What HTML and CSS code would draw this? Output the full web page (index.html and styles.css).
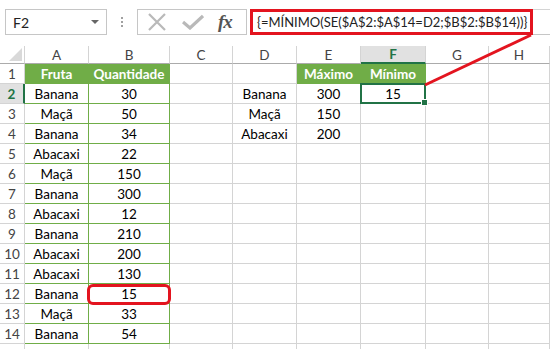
FILE: index.html
```html
<!DOCTYPE html>
<html lang="pt">
<head>
    <meta charset="UTF-8">
    <title>Mínimo com SE</title>
    <link rel="stylesheet" href="styles.css">
</head>
<body>
    <div class="toolbar">
        <div class="name-box">
            <span>F2</span>
            <span class="drop"></span>
        </div>
        <div class="dots"><i></i><i></i><i></i></div>
        <div class="fx-buttons">
            <svg width="20" height="18" viewBox="0 0 20 18"><path d="M2 1 L18 17 M18 1 L2 17" stroke="#b9b9b9" stroke-width="2.2" fill="none"/></svg>
            <svg width="22" height="16" viewBox="0 0 22 16"><path d="M1 8 L8 14 L21 2" stroke="#b9b9b9" stroke-width="3.2" fill="none"/></svg>
            <span class="fx">fx</span>
        </div>
        <div class="formula">
            <span class="formula-text">{=MÍNIMO(SE($A$2:$A$14=D2;$B$2:$B$14))}</span>
        </div>
    </div>

    <div class="sheet">
        <div class="row head">
            <div class="corner"></div>
            <div class="col">A</div><div class="col">B</div><div class="col">C</div><div class="col">D</div>
            <div class="col">E</div><div class="col active">F</div><div class="col">G</div><div class="col">H</div>
        </div>
        <div class="row">
            <div class="num">1</div>
            <div class="cell th">Fruta</div><div class="cell th">Quantidade</div><div class="cell"></div><div class="cell"></div>
            <div class="cell th">Máximo</div><div class="cell th">Mínimo</div><div class="cell"></div><div class="cell"></div>
        </div>
        <div class="row">
            <div class="num active">2</div>
            <div class="cell t">Banana</div><div class="cell t">30</div><div class="cell"></div><div class="cell">Banana</div>
            <div class="cell">300</div><div class="cell sel">15</div><div class="cell"></div><div class="cell"></div>
        </div>
        <div class="row">
            <div class="num">3</div>
            <div class="cell t">Maçã</div><div class="cell t">50</div><div class="cell"></div><div class="cell">Maçã</div>
            <div class="cell">150</div><div class="cell"></div><div class="cell"></div><div class="cell"></div>
        </div>
        <div class="row">
            <div class="num">4</div>
            <div class="cell t">Banana</div><div class="cell t">34</div><div class="cell"></div><div class="cell">Abacaxi</div>
            <div class="cell">200</div><div class="cell"></div><div class="cell"></div><div class="cell"></div>
        </div>
        <div class="row">
            <div class="num">5</div>
            <div class="cell t">Abacaxi</div><div class="cell t">22</div><div class="cell"></div><div class="cell"></div>
            <div class="cell"></div><div class="cell"></div><div class="cell"></div><div class="cell"></div>
        </div>
        <div class="row">
            <div class="num">6</div>
            <div class="cell t">Maçã</div><div class="cell t">150</div><div class="cell"></div><div class="cell"></div>
            <div class="cell"></div><div class="cell"></div><div class="cell"></div><div class="cell"></div>
        </div>
        <div class="row">
            <div class="num">7</div>
            <div class="cell t">Banana</div><div class="cell t">300</div><div class="cell"></div><div class="cell"></div>
            <div class="cell"></div><div class="cell"></div><div class="cell"></div><div class="cell"></div>
        </div>
        <div class="row">
            <div class="num">8</div>
            <div class="cell t">Abacaxi</div><div class="cell t">12</div><div class="cell"></div><div class="cell"></div>
            <div class="cell"></div><div class="cell"></div><div class="cell"></div><div class="cell"></div>
        </div>
        <div class="row">
            <div class="num">9</div>
            <div class="cell t">Banana</div><div class="cell t">210</div><div class="cell"></div><div class="cell"></div>
            <div class="cell"></div><div class="cell"></div><div class="cell"></div><div class="cell"></div>
        </div>
        <div class="row">
            <div class="num">10</div>
            <div class="cell t">Abacaxi</div><div class="cell t">200</div><div class="cell"></div><div class="cell"></div>
            <div class="cell"></div><div class="cell"></div><div class="cell"></div><div class="cell"></div>
        </div>
        <div class="row">
            <div class="num">11</div>
            <div class="cell t">Abacaxi</div><div class="cell t">130</div><div class="cell"></div><div class="cell"></div>
            <div class="cell"></div><div class="cell"></div><div class="cell"></div><div class="cell"></div>
        </div>
        <div class="row">
            <div class="num">12</div>
            <div class="cell t">Banana</div><div class="cell t mark">15</div><div class="cell"></div><div class="cell"></div>
            <div class="cell"></div><div class="cell"></div><div class="cell"></div><div class="cell"></div>
        </div>
        <div class="row">
            <div class="num">13</div>
            <div class="cell t">Maçã</div><div class="cell t">33</div><div class="cell"></div><div class="cell"></div>
            <div class="cell"></div><div class="cell"></div><div class="cell"></div><div class="cell"></div>
        </div>
        <div class="row">
            <div class="num">14</div>
            <div class="cell t">Banana</div><div class="cell t">54</div><div class="cell"></div><div class="cell"></div>
            <div class="cell"></div><div class="cell"></div><div class="cell"></div><div class="cell"></div>
        </div>
        <div class="row">
            <div class="num"></div>
            <div class="cell"></div><div class="cell"></div><div class="cell"></div><div class="cell"></div>
            <div class="cell"></div><div class="cell"></div><div class="cell"></div><div class="cell"></div>
        </div>
    </div>

    <!-- callout from the formula box to F2 -->
    <svg class="callout" width="550" height="349">
        <line x1="531" y1="35" x2="425" y2="85" stroke="#e3141f" stroke-width="3"/>
    </svg>
</body>
</html>
```

FILE: styles.css
```css
* {
    box-sizing: border-box;
}

body {
    margin: 0;
    width: 550px;
    height: 349px;
    overflow: hidden;
    background: #fff;
    font-family: 'Lato', 'Liberation Sans', sans-serif;
    color: #000;
    position: relative;
}

/* Name box + formula bar */
.toolbar {
    height: 46px;
    display: flex;
    align-items: flex-start;
    padding-top: 9px;
}

.name-box {
    margin-left: 5px;
    width: 102px;
    height: 26px;
    border: 1px solid #c6c6c6;
    display: flex;
    align-items: center;
    justify-content: space-between;
    padding: 0 7px 0 7px;
    font-size: 14px;
    color: #222;
}

.drop {
    width: 0;
    height: 0;
    border-left: 4px solid transparent;
    border-right: 4px solid transparent;
    border-top: 4px solid #666;
}

.dots {
    width: 30px;
    height: 26px;
    display: flex;
    flex-direction: column;
    align-items: center;
    justify-content: center;
    gap: 2px;
}

.dots i {
    width: 2px;
    height: 2px;
    background: #a0a0a0;
}

.fx-buttons {
    width: 110px;
    height: 26px;
    border: 1px solid #c6c6c6;
    display: flex;
    align-items: center;
    padding-left: 9px;
    gap: 15px;
}

.fx {
    font-family: 'Liberation Serif', serif;
    font-style: italic;
    font-weight: bold;
    font-size: 19px;
    color: #555;
    margin-left: -1px;
    letter-spacing: -1px;
}

.formula {
    flex: 1;
    margin-left: 3px;
    height: 26px;
    border-top: 1px solid #d4d4d4;
    border-bottom: 1px solid #c6c6c6;
    display: flex;
}

.formula-text {
    width: 283px;
    height: 26px;
    margin-top: -1px;
    border: 3px solid #e3141f;
    padding-left: 4px;
    font-size: 13px;
    line-height: 20px;
    color: #222;
    white-space: nowrap;
}

/* Grid */
.row {
    display: grid;
    grid-template-columns: 25px 64px 81px 63px 64px 64px 65px 63px 61px;
    height: 20px;
}

.row.head {
    height: 18px;
}

.corner {
    border-right: 1px solid #d4d4d4;
    border-bottom: 1px solid #ababab;
    position: relative;
}

.corner::after {
    content: "";
    position: absolute;
    right: 2px;
    bottom: 2px;
    border-left: 13px solid transparent;
    border-bottom: 13px solid #d9d9d9;
}

.col {
    border-right: 1px solid #d4d4d4;
    border-bottom: 1px solid #ababab;
    display: flex;
    align-items: center;
    justify-content: center;
    font-size: 13.5px;
    color: #444;
}

.col.active {
    background: #e1e1e1;
    border-bottom: 2px solid #217346;
    color: #217346;
    font-weight: bold;
}

.num {
    border-right: 1px solid #d4d4d4;
    border-bottom: 1px solid #d4d4d4;
    display: flex;
    align-items: center;
    justify-content: center;
    font-size: 13.5px;
    color: #444;
}

.num.active {
    background: #e1e1e1;
    border-right: 2px solid #217346;
    color: #217346;
    font-weight: bold;
}

.cell {
    border-right: 1px solid #d4d4d4;
    border-bottom: 1px solid #d4d4d4;
    display: flex;
    align-items: center;
    justify-content: center;
    font-size: 13.5px;
    white-space: nowrap;
    position: relative;
}

.cell.th {
    background: #70ad47;
    border-color: #70ad47;
    color: #fff;
    font-weight: bold;
}

.cell.t {
    border-right-color: #70ad47;
    border-bottom-color: #70ad47;
}

/* Active cell F2 */
.cell.sel::after {
    content: "";
    position: absolute;
    top: -1px;
    left: -1px;
    right: -1px;
    bottom: -1px;
    border: 2px solid #217346;
}

.cell.sel::before {
    content: "";
    position: absolute;
    right: -3px;
    bottom: -3px;
    width: 5px;
    height: 5px;
    background: #217346;
    border: 1px solid #fff;
    z-index: 1;
}

/* Red annotation round B12 */
.cell.mark::after {
    content: "";
    position: absolute;
    top: 0;
    left: -2px;
    right: -2px;
    bottom: -2px;
    border: 3px solid #e3141f;
    border-radius: 6px;
}

.callout {
    position: absolute;
    top: 0;
    left: 0;
    pointer-events: none;
}
```
